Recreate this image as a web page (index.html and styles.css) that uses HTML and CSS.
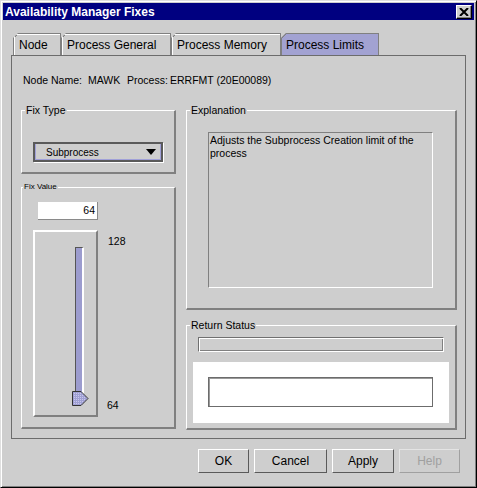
FILE: index.html
```html
<!DOCTYPE html>
<html>
<head>
<meta charset="utf-8">
<title>Availability Manager Fixes</title>
<link rel="stylesheet" href="styles.css">
</head>
<body>
<div class="window">
  <div class="titlebar">
    <span class="title">Availability Manager Fixes</span>
    <span class="close"><svg width="10" height="8" viewBox="0 0 10 8"><path d="M1 0 L9 8 M9 0 L1 8" stroke="#000" stroke-width="2" fill="none"/></svg></span>
  </div>
  <div class="tabs">
    <div class="tab t-node">Node</div>
    <div class="tab t-gen">Process General</div>
    <div class="tab t-mem">Process Memory</div>
    <div class="tab t-lim selected">Process Limits</div>
  </div>
  <div class="panel">
    <div class="nodeinfo"><span class="k1">Node Name:</span><span class="v1">MAWK</span><span class="k2">Process:</span><span>ERRFMT (20E00089)</span></div>
    <div class="columns">
      <div class="col col-left">
        <div class="group g-fixtype">
          <span class="legend">Fix Type</span>
          <div class="combo"><span class="combo-text">Subprocess</span><span class="arrow"></span></div>
        </div>
        <div class="group g-fixvalue">
          <span class="legend small">Fix Value</span>
          <div class="field">64</div>
          <div class="slider-row">
            <div class="slider">
              <div class="track"></div>
              <svg class="thumb" width="17" height="16" viewBox="0 0 17 16">
                <defs>
                  <pattern id="dots" width="2" height="2" patternUnits="userSpaceOnUse">
                    <rect width="2" height="2" fill="#a0a0d4"/>
                    <rect width="1" height="1" fill="#c8c8ec"/>
                  </pattern>
                </defs>
                <path d="M0.5 0.5 H9 L16 7.5 L9 14.5 H0.5 Z" fill="url(#dots)" stroke="#333" stroke-width="1"/>
              </svg>
            </div>
            <div class="scale"><span>128</span><span>64</span></div>
          </div>
        </div>
      </div>
      <div class="col col-right">
        <div class="group g-expl">
          <span class="legend">Explanation</span>
          <div class="textarea">Adjusts the Subprocess Creation limit of the process</div>
        </div>
        <div class="group g-status">
          <span class="legend">Return Status</span>
          <div class="progress"></div>
          <div class="whitearea"><div class="statusbox"></div></div>
        </div>
      </div>
    </div>
  </div>
  <div class="buttons">
    <div class="btn b-ok">OK</div>
    <div class="btn b-cancel">Cancel</div>
    <div class="btn b-apply">Apply</div>
    <div class="btn b-help disabled">Help</div>
  </div>
</div>
</body>
</html>
```
FILE: styles.css
```css
body {
  margin: 0;
  background: #ffffff;
  font-family: "Liberation Sans", Arial, sans-serif;
  color: #000;
}

.window {
  width: 477px;
  height: 488px;
  box-sizing: border-box;
  background: #cecece;
  border: 1px solid;
  border-color: #dfdfdf #000 #000 #dfdfdf;
  box-shadow: inset 1px 1px #fff, inset -1px -1px #808080;
  padding: 2px;
  display: flex;
  flex-direction: column;
}

.titlebar {
  height: 17px;
  background: #000080;
  display: flex;
  align-items: center;
  justify-content: space-between;
  padding: 0 2px;
}

.title {
  color: #fff;
  font-weight: bold;
  font-size: 12px;
}

.close {
  width: 16px;
  height: 14px;
  box-sizing: border-box;
  background: #cecece;
  border: 1px solid;
  border-color: #fff #000 #000 #fff;
  box-shadow: inset -1px -1px #808080;
  display: flex;
  align-items: center;
  justify-content: center;
}

.tabs {
  display: flex;
  margin: 13px 0 0 10px;
  height: 22px;
}

.tab {
  box-sizing: border-box;
  height: 22px;
  border: 1px solid #808080;
  border-bottom: none;
  box-shadow: inset 1px 1px #fff;
  font-size: 12px;
  display: flex;
  align-items: center;
  padding-left: 5px;
  clip-path: polygon(5px 0, 100% 0, 100% 100%, 0 100%, 0 5px);
  background-color: #cecece;
  background-image: linear-gradient(to bottom right, transparent 35%, #808080 35%, #808080 48%, transparent 48%);
  background-size: 7px 7px;
  background-repeat: no-repeat;
  background-position: -1px -1px;
}

.t-node { width: 48px; }
.t-gen { width: 110px; }
.t-mem { width: 110px; }
.t-lim { width: 98px; padding-left: 4px; }

.tab.selected {
  background-color: #a2a2d2;
  box-shadow: none;
}

.panel {
  margin-left: 8px;
  width: 455px;
  height: 384px;
  box-sizing: border-box;
  border: 1px solid #6c6c6c;
  padding-left: 9px;
}

.nodeinfo {
  font-size: 10.5px;
  line-height: 13px;
  margin-top: 18px;
  padding-left: 2px;
  white-space: nowrap;
}

.nodeinfo span { display: inline-block; }
.k1 { width: 65px; }
.v1 { width: 39px; }
.k2 { width: 43px; }

.columns {
  display: grid;
  grid-template-columns: 155px 271px;
  column-gap: 10px;
  margin-top: 23px;
}

.col {
  display: flex;
  flex-direction: column;
}

.col-left { gap: 13px; }
.col-right { gap: 15px; }

.group {
  position: relative;
  box-sizing: border-box;
  border-style: solid;
  border-width: 1px 2px 2px 1px;
  border-color: #fff #808080 #808080 #fff;
  display: flex;
  flex-direction: column;
  align-items: flex-start;
}

.g-fixtype { height: 64px; }
.g-fixvalue { height: 242px; }
.g-expl { height: 200px; }
.g-status { height: 105px; }

.legend {
  position: absolute;
  top: -7px;
  left: 3px;
  background: #cecece;
  padding: 0 1px;
  font-size: 10.5px;
  line-height: 13px;
}

.legend.small {
  font-size: 8px;
  line-height: 10px;
  top: -6px;
  left: 1px;
}

.combo {
  margin: 31px 0 0 11px;
  width: 130px;
  height: 20px;
  box-sizing: border-box;
  border: 2px solid #5a5a5a;
  box-shadow: 1px 1px 0 #fff, inset 1px 0 #a0a0d8, inset -1px -1px #a0a0d8;
  display: flex;
  align-items: center;
  justify-content: space-between;
  padding: 0 5px 0 11px;
  font-size: 10px;
}

.arrow {
  width: 0;
  height: 0;
  border-left: 5px solid transparent;
  border-right: 5px solid transparent;
  border-top: 6px solid #000;
}

.field {
  margin: 14px 0 0 16px;
  width: 60px;
  height: 18px;
  box-sizing: border-box;
  background: #fff;
  border-right: 1px solid #8a8a8a;
  border-bottom: 1px solid #8a8a8a;
  font-size: 10.5px;
  line-height: 17px;
  text-align: right;
  padding-right: 2px;
}

.slider-row {
  display: flex;
  margin: 10px 0 0 11px;
}

.slider {
  position: relative;
  width: 65px;
  height: 187px;
  box-sizing: border-box;
  border: 2px solid;
  border-color: #fff #808080 #808080 #fff;
}

.track {
  margin: 15px 0 0 40px;
  width: 9px;
  height: 152px;
  box-sizing: border-box;
  background: #9c9cce;
  border-left: 1px solid #555;
  border-top: 1px solid #555;
  border-right: 2px solid #fff;
}

.thumb {
  position: absolute;
  left: 37px;
  top: 159px;
}

.scale {
  display: flex;
  flex-direction: column;
  justify-content: space-between;
  margin-left: 10px;
  padding: 5px 0;
  font-size: 10.5px;
  line-height: 13px;
}

.scale span:last-child { margin-left: -1px; }

.textarea {
  margin: 21px 0 0 21px;
  width: 225px;
  height: 156px;
  box-sizing: border-box;
  border: 1px solid;
  border-color: #808080 #fff #fff #808080;
  font-size: 10.5px;
  line-height: 13px;
  padding: 1px 1px;
}

.progress {
  margin: 11px 0 0 11px;
  width: 246px;
  height: 15px;
  box-sizing: border-box;
  border: 1px solid;
  border-color: #707070 #fff #fff #707070;
  box-shadow: inset 1px 1px #fff, inset -1px -1px #808080;
}

.whitearea {
  margin: 10px 0 0 6px;
  width: 256px;
  height: 61px;
  background: #fff;
  padding: 15px;
  box-sizing: border-box;
}

.statusbox {
  width: 225px;
  height: 30px;
  box-sizing: border-box;
  border: 1px solid #6c6c6c;
  box-shadow: inset 1px 1px #9a9a9a;
}

.buttons {
  display: flex;
  justify-content: flex-end;
  gap: 5px;
  margin: 10px 14px 0 0;
}

.btn {
  height: 24px;
  box-sizing: border-box;
  border: 1px solid;
  border-color: #fff #5a5a5a #5a5a5a #fff;
  font-size: 12px;
  display: flex;
  align-items: center;
  justify-content: center;
}

.b-ok { width: 51px; }
.b-cancel { width: 73px; }
.b-apply { width: 62px; }
.b-help { width: 61px; }

.btn.disabled {
  color: #a0a0a0;
  border-color: #e4e4e4 #a0a0a0 #a0a0a0 #e4e4e4;
}
```
